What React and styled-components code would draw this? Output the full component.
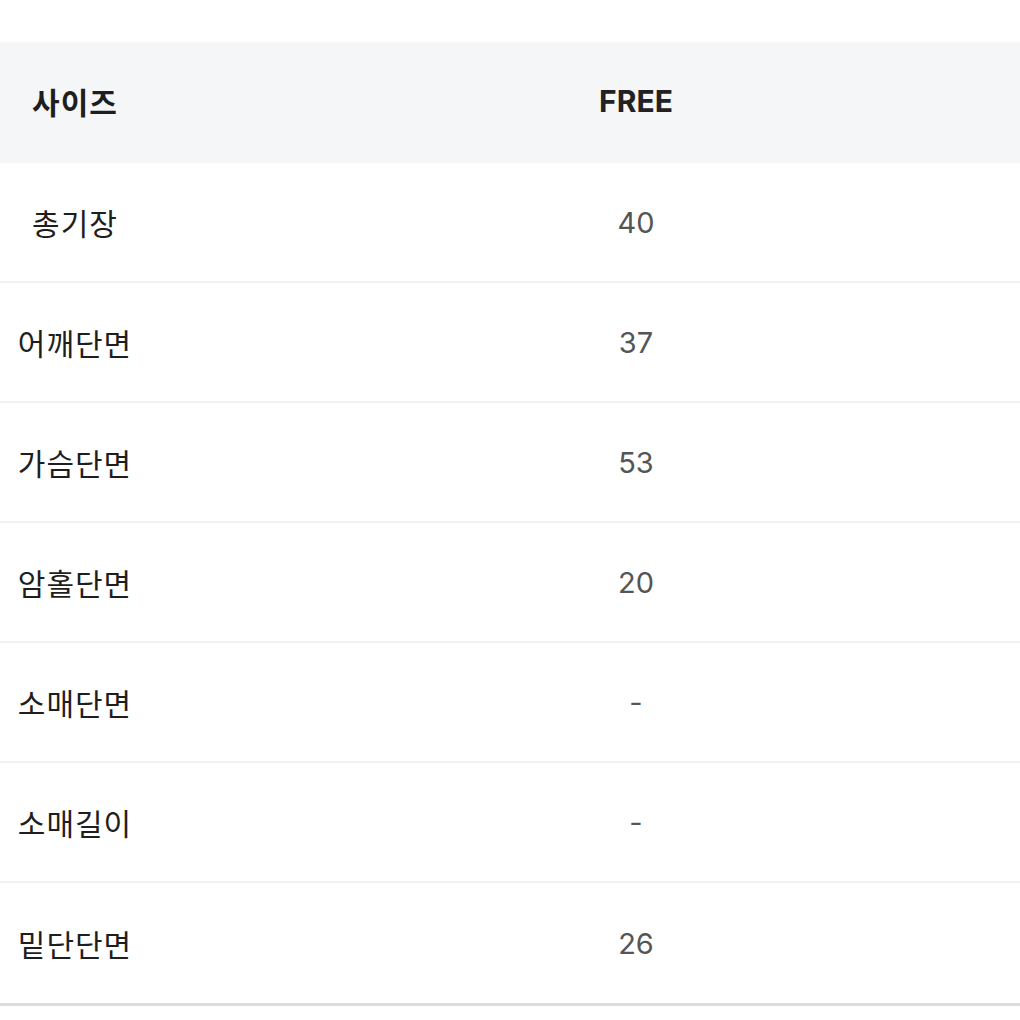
import React from 'react';
import styled, { createGlobalStyle } from 'styled-components';

const GlobalStyle = createGlobalStyle`
  body {
    margin: 0;
    background: #ffffff;
    font-family: Inter, "Noto Sans CJK KR", sans-serif;
  }
`;

const Page = styled.div`
  width: 1020px;
  padding-top: 42px;
  overflow: hidden;
`;

const Table = styled.div`
  display: flex;
  flex-direction: column;
  border-bottom: 3px solid #dcdcdc;
`;

const Row = styled.div`
  display: grid;
  grid-template-columns: 149px 1fr;
  align-items: center;
  box-sizing: border-box;
  height: ${props => props.head ? 121 : 120}px;
  padding-bottom: ${props => props.head ? 4 : 0}px;
  background: ${props => props.head ? '#f4f6f8' : '#ffffff'};
  border-bottom: ${props => props.head || props.last ? 'none' : '2px solid #f2f2f2'};
`;

const Label = styled.div`
  text-align: center;
  font-family: "Noto Sans CJK KR", sans-serif;
  font-size: 30px;
  font-weight: ${props => props.head ? 700 : 400};
  color: #1e1e1e;
  letter-spacing: 1px;
  padding-left: 1px;
`;

const Value = styled.div`
  text-align: center;
  padding-left: 103px;
  font-family: Inter, "Noto Sans CJK KR", sans-serif;
  font-size: ${props => props.head ? 30 : 29}px;
  font-weight: ${props => props.head ? 700 : 400};
  color: ${props => props.head ? '#222222' : '#555555'};
`;

const rows = [
  ['총기장', '40'],
  ['어깨단면', '37'],
  ['가슴단면', '53'],
  ['암홀단면', '20'],
  ['소매단면', '-'],
  ['소매길이', '-'],
  ['밑단단면', '26'],
];

export default function App() {
  return (
    <Page>
      <GlobalStyle />
      <Table>
        <Row head>
          <Label head>사이즈</Label>
          <Value head>FREE</Value>
        </Row>
        {rows.map(([name, val], i) => (
          <Row key={name} last={i === rows.length - 1}>
            <Label>{name}</Label>
            <Value>{val}</Value>
          </Row>
        ))}
      </Table>
    </Page>
  );
}
